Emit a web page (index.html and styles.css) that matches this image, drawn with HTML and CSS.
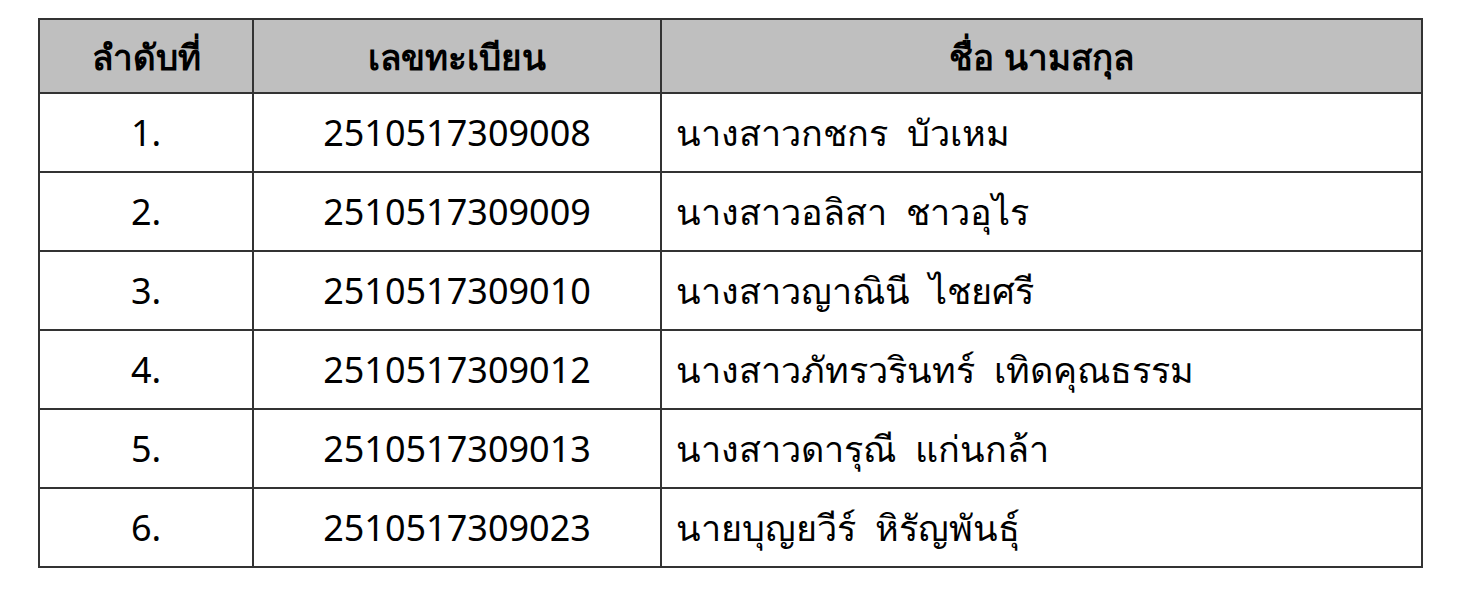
FILE: index.html
```html
<!DOCTYPE html>
<html lang="th">
<head>
<meta charset="utf-8">
<link rel="stylesheet" href="styles.css">
</head>
<body>
<div class="page">
<table class="list">
<colgroup><col class="c1"><col class="c2"><col class="c3"></colgroup>
<thead>
<tr><th>ลำดับที่</th><th>เลขทะเบียน</th><th>ชื่อ นามสกุล</th></tr>
</thead>
<tbody>
<tr><td class="ctr">1.</td><td class="ctr">2510517309008</td><td>นางสาวกชกร&nbsp; บัวเหม</td></tr>
<tr><td class="ctr">2.</td><td class="ctr">2510517309009</td><td>นางสาวอลิสา&nbsp; ชาวอุไร</td></tr>
<tr><td class="ctr">3.</td><td class="ctr">2510517309010</td><td>นางสาวญาณินี&nbsp; ไชยศรี</td></tr>
<tr><td class="ctr">4.</td><td class="ctr">2510517309012</td><td>นางสาวภัทรวรินทร์&nbsp; เทิดคุณธรรม</td></tr>
<tr><td class="ctr">5.</td><td class="ctr">2510517309013</td><td>นางสาวดารุณี&nbsp; แก่นกล้า</td></tr>
<tr><td class="ctr">6.</td><td class="ctr">2510517309023</td><td>นายบุญยวีร์&nbsp; หิรัญพันธุ์</td></tr>
</tbody>
</table>
</div>
</body>
</html>
```
FILE: styles.css
```css
html, body { margin: 0; padding: 0; background: #fff; }
.page { padding: 18px 0 0 38px; }
.list {
  border-collapse: collapse;
  width: 1385px;
  font-family: "Noto Sans", "DejaVu Sans", sans-serif;
  font-size: 36px;
  color: #000;
}
.c1 { width: 214px; }
.c2 { width: 408px; }
.list th, .list td {
  border: 2px solid #333;
  padding: 0 14px;
  line-height: 1;
}
.list th {
  background: #bfbfbf;
  height: 72px;
  font-size: 35px;
  font-weight: bold;
  text-align: center;
}
.list td { height: 77px; }
.list td.ctr { text-align: center; }
```
